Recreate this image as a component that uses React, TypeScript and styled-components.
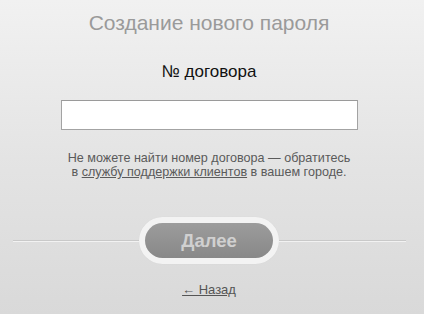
import * as React from 'react'
import styled, { createGlobalStyle } from 'styled-components'

const GlobalStyle = createGlobalStyle`
  html, body {
    margin: 0;
    padding: 0;
  }
  body {
    font-family: "Liberation Sans", Arial, sans-serif;
  }
`

const Page = styled.div`
  width: 424px;
  height: 314px;
  background: linear-gradient(to bottom, #f1f1f1 0%, #e4e4e4 50%, #d9d9d9 100%);
  display: flex;
  flex-direction: column;
  align-items: center;
  box-sizing: border-box;
  padding: 11px 6px 0 0;
`

const Title = styled.h1`
  margin: 0;
  font-size: 21px;
  font-weight: normal;
  line-height: 24px;
  color: #9a9a9a;
`

const Label = styled.label`
  margin-top: 27px;
  font-size: 17px;
  line-height: 20px;
  color: #111;
`

const Input = styled.input`
  margin-top: 18px;
  width: 297px;
  height: 30px;
  box-sizing: border-box;
  border: 1px solid #a3a3a3;
  border-top-color: #9a9a9a;
  background: #fff;
  outline: none;
  padding: 0 6px;
  font-family: inherit;
  font-size: 14px;
`

const Hint = styled.p`
  margin: 21px 0 0;
  font-size: 12.6px;
  line-height: 14px;
  color: #5a5a5a;
  text-align: center;
`

const HintLink = styled.a`
  color: #5a5a5a;
  text-decoration: underline;
`

const ButtonRow = styled.div`
  margin-top: 38px;
  width: 393px;
  display: flex;
  align-items: center;
`

const Rule = styled.div`
  flex: 1;
  height: 1px;
  background: #c9c9c9;
  border-bottom: 1px solid #f2f2f2;
`

const ButtonRing = styled.div`
  padding: 6px;
  border-radius: 24px;
  background: #f3f3f3;
  box-shadow: 0 0 1px rgba(0, 0, 0, 0.08);
`

const NextButton = styled.button`
  display: block;
  width: 128px;
  height: 35px;
  border: none;
  border-radius: 18px;
  background: linear-gradient(to bottom, #9c9c9c 0%, #888 100%);
  color: #d0d0d0;
  font-family: inherit;
  font-size: 18.5px;
  font-weight: bold;
  cursor: default;
  padding: 0;
`

const BackLink = styled.a`
  margin-top: 18px;
  font-size: 13px;
  line-height: 15px;
  color: #555;
  text-decoration: underline;
`

const App: React.FC = () => {
  return (
    <Page>
      <GlobalStyle />
      <Title>Создание нового пароля</Title>
      <Label htmlFor="contract">№ договора</Label>
      <Input id="contract" type="text" />
      <Hint>
        Не можете найти номер договора — обратитесь
        <br />
        в <HintLink href="#">службу поддержки клиентов</HintLink> в вашем городе.
      </Hint>
      <ButtonRow>
        <Rule />
        <ButtonRing>
          <NextButton>Далее</NextButton>
        </ButtonRing>
        <Rule />
      </ButtonRow>
      <BackLink href="#">← Назад</BackLink>
    </Page>
  )
}

export default App
